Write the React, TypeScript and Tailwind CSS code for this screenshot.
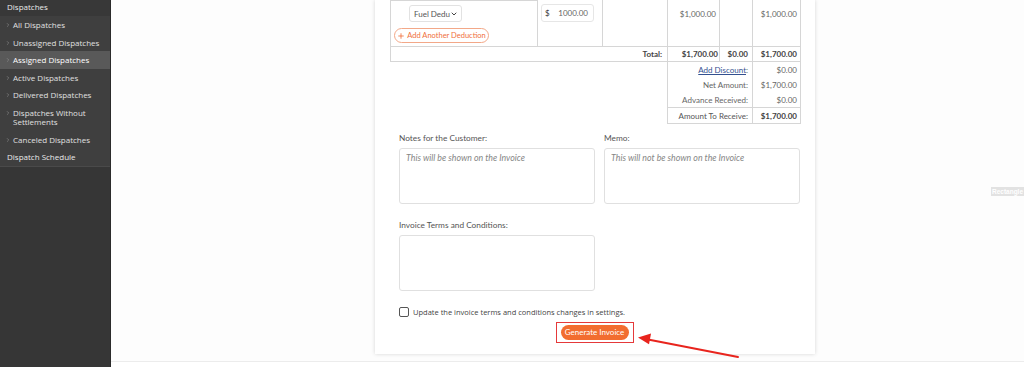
import React from 'react';
import { ChevronDown, ChevronRight, Plus } from 'lucide-react';

const subItems = [
  { label: 'All Dispatches' },
  { label: 'Unassigned Dispatches' },
  { label: 'Assigned Dispatches', active: true },
  { label: 'Active Dispatches' },
  { label: 'Delivered Dispatches' },
  { label: 'Dispatches Without Settlements' },
  { label: 'Canceled Dispatches' },
];

function Sidebar() {
  return (
    <aside className="w-[111px] shrink-0 bg-[#363636] border-r border-[#2b2b2b] font-['Open_Sans',sans-serif] text-[8px] text-[#e0e0e0]">
      <div className="h-[16px] bg-[#383838] px-[7px] flex items-end pb-[5px] leading-[9px] text-[#eaeaea]">Dispatches</div>
      {subItems.map((item) => (
        <div
          key={item.label}
          className={`flex items-start gap-[2px] pl-[5px] pr-[4px] py-[4px] leading-[9.5px] ${
            item.active ? 'bg-[#595959] text-white' : 'bg-[#3f3f3f]'
          }`}
        >
          <ChevronRight size={6} strokeWidth={2} className="mt-[2px] shrink-0 text-[#9a9a9a]" />
          <span className={item.label.includes('Without') ? 'w-[80px]' : ''}>{item.label}</span>
        </div>
      ))}
      <div className="bg-[#3f3f3f] px-[7px] py-[4px] leading-[9.5px] border-b border-[#4a4a4a] text-[#eaeaea]">
        Dispatch Schedule
      </div>
    </aside>
  );
}

function Cell({ className = '', children }: { className?: string; children?: React.ReactNode }) {
  return <div className={`border-r border-b border-[#d6d6d6] ${className}`}>{children}</div>;
}

function InvoiceTable() {
  return (
    <div className="mx-[15px] text-[8px] text-[#666]">
      <div className="grid grid-cols-[147px_65px_65px_52px_33px_48px] border-l border-[#d6d6d6]">
        <Cell className="h-[47px] border-t flex flex-col items-start pl-[3px] pt-[4px]">
          <div className="ml-[15px] flex h-[17px] w-[53px] items-center justify-between overflow-hidden whitespace-nowrap rounded-[3px] border border-[#e2e2e2] pl-[4px] pr-[3px] text-[8px] text-[#555]">
            <span>Fuel Dedu</span>
            <ChevronDown size={8} strokeWidth={3} className="shrink-0 text-[#444]" />
          </div>
          <button className="mt-[6px] flex h-[15px] w-[95px] items-center justify-center gap-[2px] rounded-full border border-[#f3a888] text-[7.5px] text-[#f0703c]">
            <Plus size={8} strokeWidth={2.5} />
            Add Another Deduction
          </button>
        </Cell>
        <Cell className="pl-[3px] pt-[4px]">
          <div className="flex h-[18px] w-[53px] items-center justify-between rounded-[3px] border border-[#e6e6e6] pl-[3px] pr-[5px] text-[8px]">
            <span className="text-[#333]">$</span>
            <span className="text-[#666]">1000.00</span>
          </div>
        </Cell>
        <Cell />
        <Cell className="pr-[3px] pt-[8px] text-right">$1,000.00</Cell>
        <Cell />
        <Cell className="pr-[3px] pt-[8px] text-right">$1,000.00</Cell>

        <Cell className="col-span-3 h-[15px] pr-[5px] flex items-center justify-end font-bold text-[#444]">Total:</Cell>
        <Cell className="pr-[1px] flex items-center justify-end font-bold text-[#444]">$1,700.00</Cell>
        <Cell className="pr-[4px] flex items-center justify-end font-bold text-[#444]">$0.00</Cell>
        <Cell className="pr-[3px] flex items-center justify-end font-bold text-[#444]">$1,700.00</Cell>
      </div>

      <div className="ml-auto grid w-[133px] grid-cols-[85px_48px] border-l border-[#d6d6d6]">
        <div className="h-[15px] border-r border-[#d6d6d6] pr-[4px] flex items-center justify-end">
          <span className="text-[#33508f] underline">Add Discount</span>:
        </div>
        <div className="border-r border-[#d6d6d6] pr-[3px] flex items-center justify-end">$0.00</div>
        <div className="h-[15px] border-r border-[#d6d6d6] pr-[4px] flex items-center justify-end">Net Amount:</div>
        <div className="border-r border-[#d6d6d6] pr-[3px] flex items-center justify-end">$1,700.00</div>
        <div className="h-[15px] border-r border-[#d6d6d6] pr-[4px] flex items-center justify-end">Advance Received:</div>
        <div className="border-r border-[#d6d6d6] pr-[3px] flex items-center justify-end">$0.00</div>
        <div className="h-[17px] border-t border-b border-r border-[#d6d6d6] pr-[4px] flex items-center justify-end text-[#555]">
          Amount To Receive:
        </div>
        <div className="border-t border-b border-r border-[#d6d6d6] pr-[3px] flex items-center justify-end font-bold text-[#444]">
          $1,700.00
        </div>
      </div>
    </div>
  );
}

function Field({ label, placeholder }: { label: string; placeholder?: string }) {
  return (
    <div className="flex flex-col">
      <label className="mb-[5px] leading-[10px] text-[8.3px] text-[#555]">{label}</label>
      <textarea
        placeholder={placeholder}
        className="block h-[56px] w-[196px] resize-none rounded-[3px] border border-[#e0e0e0] bg-white px-[6px] pt-[3px] text-[8.8px] leading-[12px] outline-none placeholder:italic placeholder:text-[#858585]"
      />
    </div>
  );
}

export default function App() {
  return (
    <div className="relative flex h-[367px] w-[1024px] overflow-hidden bg-white font-['Lato',sans-serif]">
      <Sidebar />
      <main className="flex-1">
        <div className="h-[362px] border-b border-[#ececec] bg-[#fdfdfd]">
          <div className="ml-[264px] w-[440px] bg-white pb-[11px] shadow-[0_0_4px_rgba(0,0,0,0.16)]">
            <InvoiceTable />

            <div className="px-[24px] pt-[9px]">
              <div className="grid grid-cols-[196px_196px] gap-x-[9px]">
                <Field label="Notes for the Customer:" placeholder="This will be shown on the Invoice" />
                <Field label="Memo:" placeholder="This will not be shown on the Invoice" />
              </div>
              <div className="mt-[16px]">
                <Field label="Invoice Terms and Conditions:" />
              </div>

              <label className="mt-[15px] flex h-[11px] items-center gap-[4px] font-['Open_Sans',sans-serif] text-[7.5px] leading-[10px] text-[#444]">
                <span className="h-[10px] w-[10px] rounded-[2px] border border-[#555] bg-white" />
                Update the invoice terms and conditions changes in settings.
              </label>

              <div className="mt-[5px] flex justify-center pr-[1px]">
                <div className="flex border border-[#e5393a] px-[4px] py-[2px]">
                  <button className="h-[15px] w-[68px] rounded-full bg-[#f26d30] text-[8px] leading-[15px] text-white">
                    Generate Invoice
                  </button>
                </div>
              </div>
            </div>
          </div>
        </div>
      </main>

      <svg className="absolute left-[630px] top-[328px]" width="115" height="35" viewBox="630 328 115 35">
        <line x1="738" y1="357" x2="648" y2="339.5" stroke="#e8241d" strokeWidth="2" strokeLinecap="round" />
        <polygon points="638,337.5 651,333.6 649,344.2" fill="#e8241d" />
      </svg>

      <div className="absolute left-[991px] top-[187px] flex h-[9px] w-[33px] items-center justify-center bg-[#e2e2e2] font-['Liberation_Sans',sans-serif] text-[6.5px] font-bold text-white">
        Rectangle
      </div>
    </div>
  );
}
